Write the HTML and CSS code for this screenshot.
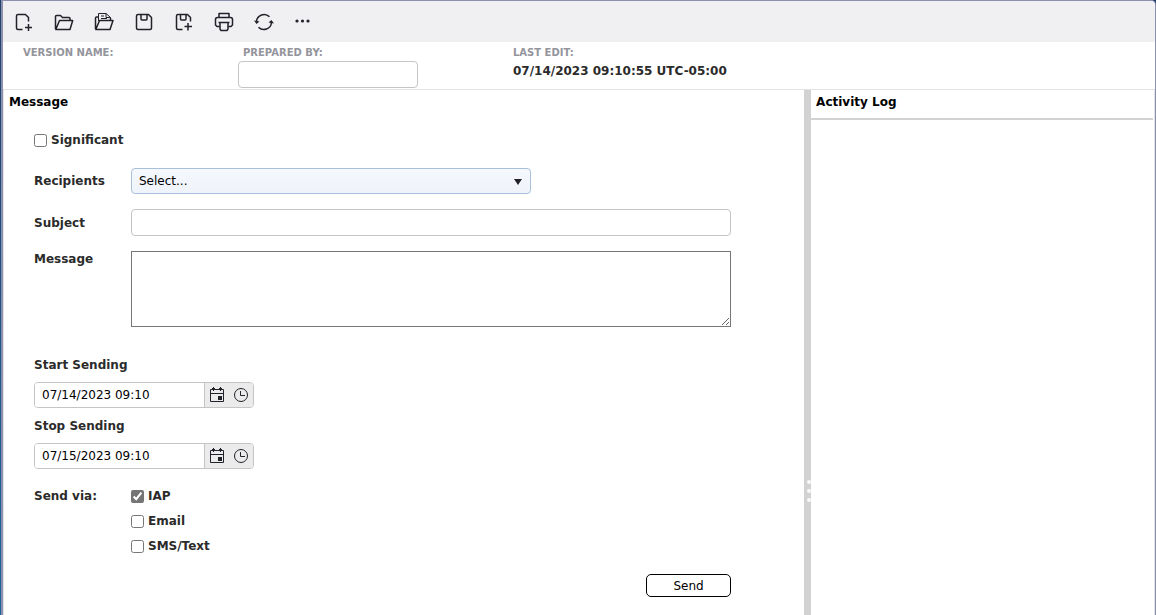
FILE: index.html
```html
<!DOCTYPE html>
<html lang="en">
<head>
    <meta charset="utf-8">
    <title>Message</title>
    <link rel="stylesheet" href="styles.css">
</head>
<body>
    <div class="window">
        <div class="toolbar">
            <button type="button" aria-label="New">
                <svg width="20" height="20" viewBox="0 0 20 20"><path d="M8.500 17.500H4Q2.500 17.500 2.500 16V4Q2.500 2.500 4 2.500H11.500L14.500 5.500V9.500M11 15.500H18M14.500 12V19"/></svg>
            </button>
            <button type="button" aria-label="Open">
                <svg width="20" height="20" viewBox="0 0 20 20"><path d="M1.500 17V4.500Q1.500 3.500 2.500 3.500H6.500L8.500 5.500H15Q16 5.500 16 6.500V8.500M1.800 17.500L5.500 8.500H18.700L16 17.500Z"/></svg>
            </button>
            <button type="button" aria-label="Open copy">
                <svg width="20" height="20" viewBox="0 0 20 20"><path d="M1.500 17V6Q1.500 5 2.500 5H4.500M16.500 6V8.500M1.800 17.500L5.500 8.500H19L16 17.500Z"/><path class="thin" d="M4.500 9V1.500H12L16.500 5.500V8M12 1.500V5.500H16.500M7 4H10M7 6.500H13"/></svg>
            </button>
            <button type="button" aria-label="Save">
                <svg width="20" height="20" viewBox="0 0 20 20"><path d="M4 2.500H14.500L17.500 5.500V16Q17.500 17.500 16 17.500H4Q2.500 17.500 2.500 16V4Q2.500 2.500 4 2.500ZM7 2.500V7Q7 8 8 8H12Q13 8 13 7V2.500"/></svg>
            </button>
            <button type="button" aria-label="Save as">
                <svg width="20" height="20" viewBox="0 0 20 20"><path d="M8.500 17.500H4Q2.500 17.500 2.500 16V4Q2.500 2.500 4 2.500H13.500L16.500 5.500V9.500M6.500 2.500V7Q6.500 8 7.500 8H11Q12 8 12 7V2.500M10.500 14.500H18M14 11V18.500"/></svg>
            </button>
            <button type="button" aria-label="Print">
                <svg width="20" height="20" viewBox="0 0 20 20"><path d="M5 5.500V1.500H15V5.500M5.500 14.500H3L1.500 13V7.500Q1.500 5.500 3.500 5.500H16.500Q18.500 5.500 18.500 7.500V13L17 14.500H14.500M4.500 10.500H15.500M6 10.500V17L7 18.500H13L14 17V10.500"/></svg>
            </button>
            <button type="button" aria-label="Refresh">
                <svg width="20" height="20" viewBox="0 0 20 20"><path d="M2.500 9.500A7.600 7.600 0 0 1 15.500 4.800M17.500 10.500A7.600 7.600 0 0 1 4.500 15.200"/><path class="solid" d="M0 8.500L5.500 9.500L2.500 12ZM14.500 10.500L17.500 8L20 11.500Z"/></svg>
            </button>
            <button type="button" aria-label="More">
                <svg width="20" height="20" viewBox="0 0 20 20"><g class="solid"><circle cx="3" cy="9" r="1.600"/><circle cx="8.500" cy="9" r="1.600"/><circle cx="14" cy="9" r="1.600"/></g></svg>
            </button>
        </div>

        <div class="info">
            <div class="info-item version">
                <span class="caption">VERSION NAME:</span>
            </div>
            <div class="info-item prepared">
                <label class="caption" for="prepared">PREPARED BY:</label>
                <input type="text" id="prepared" class="text-box">
            </div>
            <div class="info-item">
                <span class="caption">LAST EDIT:</span>
                <span class="last-edit">07/14/2023 09:10:55 UTC-05:00</span>
            </div>
        </div>

        <div class="panes">
            <div class="pane main-pane">
                <h1>Message</h1>
                <form class="message-form">
                    <label class="check"><input type="checkbox"> Significant</label>

                    <div class="fields">
                        <label for="recipients">Recipients</label>
                        <div class="picker">
                            <select id="recipients">
                                <option>Select...</option>
                            </select>
                            <svg class="arrow" width="8" height="6" viewBox="0 0 8 6"><path d="M0 0H8L4 6Z"/></svg>
                        </div>
                        <label for="subject">Subject</label>
                        <input type="text" id="subject" class="text-box">
                        <label for="message" class="top">Message</label>
                        <textarea id="message"></textarea>
                    </div>

                    <div class="dates">
                        <label for="start">Start Sending</label>
                        <div class="date-box">
                            <input type="text" id="start" value="07/14/2023 09:10">
                            <div class="date-buttons">
                                <button type="button" aria-label="Pick start date">
                                    <svg width="16" height="16" viewBox="0 0 16 16"><path d="M1.500 2.500H14.500V14.500H1.500ZM1.500 6.500H14.500M4.500 0V4M11.500 0V4M3 1.500H6M10 1.500H13"/><path class="solid" d="M9 9H13V13H9Z"/></svg>
                                </button>
                                <button type="button" aria-label="Pick start time">
                                    <svg width="16" height="16" viewBox="0 0 16 16"><circle cx="8" cy="8" r="6.500"/><path d="M7.500 4V8.500H12"/></svg>
                                </button>
                            </div>
                        </div>
                        <label for="stop">Stop Sending</label>
                        <div class="date-box">
                            <input type="text" id="stop" value="07/15/2023 09:10">
                            <div class="date-buttons">
                                <button type="button" aria-label="Pick stop date">
                                    <svg width="16" height="16" viewBox="0 0 16 16"><path d="M1.500 2.500H14.500V14.500H1.500ZM1.500 6.500H14.500M4.500 0V4M11.500 0V4M3 1.500H6M10 1.500H13"/><path class="solid" d="M9 9H13V13H9Z"/></svg>
                                </button>
                                <button type="button" aria-label="Pick stop time">
                                    <svg width="16" height="16" viewBox="0 0 16 16"><circle cx="8" cy="8" r="6.500"/><path d="M7.500 4V8.500H12"/></svg>
                                </button>
                            </div>
                        </div>
                    </div>

                    <div class="send-via">
                        <span>Send via:</span>
                        <div class="checks">
                            <label class="check"><input type="checkbox" checked> IAP</label>
                            <label class="check"><input type="checkbox"> Email</label>
                            <label class="check"><input type="checkbox"> SMS/Text</label>
                        </div>
                    </div>

                    <button type="button" class="send">Send</button>
                </form>
            </div>
            <div class="splitter"><i></i><i></i><i></i></div>
            <div class="pane log-pane">
                <h2>Activity Log</h2>
            </div>
        </div>
    </div>
</body>
</html>
```
FILE: styles.css
```css
* {
    box-sizing: border-box;
}
body {
    margin: 0;
    background: linear-gradient(#24406c, #1c659c);
    font-family: Verdana, "DejaVu Sans", sans-serif;
    font-size: 12px;
    line-height: 16px;
    color: #2b2b2b;
}
input, select, textarea, button {
    font: inherit;
    color: #000;
    margin: 0;
}
.window {
    display: flex;
    flex-direction: column;
    min-height: 100vh;
    margin-left: 1px;
    border: 1px solid #8b91ad;
    border-left-width: 2px;
    border-bottom: 0;
    border-top-right-radius: 5px;
    background: #fff;
    overflow: hidden;
}

/* toolbar */
.toolbar {
    display: flex;
    align-items: center;
    gap: 20px;
    height: 41px;
    padding: 0 11px;
    background: #f0eff2;
}
.toolbar button {
    width: 20px;
    height: 20px;
    padding: 0;
    border: 0;
    background: none;
}
svg {
    display: block;
    fill: none;
    stroke: #22222a;
}
.toolbar svg {
    stroke-width: 1.5;
    stroke-linejoin: round;
}
.toolbar .thin {
    stroke-width: 1;
}
svg .solid {
    fill: #22222a;
    stroke: none;
}

/* version info */
.info {
    display: flex;
    height: 48px;
    padding-left: 20px;
    border-bottom: 1px solid #e2e2e4;
}
.info-item {
    display: flex;
    flex-direction: column;
    padding-top: 3px;
}
.version {
    width: 215px;
}
.prepared {
    width: 275px;
}
.prepared .caption {
    padding-left: 5px;
}
.prepared .text-box {
    width: 180px;
}
.caption {
    font-size: 10px;
    font-weight: bold;
    color: #94949c;
}
.last-edit {
    padding-top: 2px;
    font-weight: bold;
}
.text-box {
    height: 27px;
    padding: 0 7px;
    border: 1px solid #c4c4c4;
    border-radius: 4px;
    background: #fff;
}

/* panes */
.panes {
    display: flex;
    flex: 1;
}
.pane {
    flex: 3;
    min-width: 0;
}
.main-pane {
    flex: 7;
    border-left: 1px solid #e6e4ea;
}
.log-pane {
    border-right: 1px solid #e2e2e4;
}
h1, h2 {
    margin: 0;
    padding: 4px 5px 0;
    font-size: 12px;
    line-height: 16px;
    color: #000;
}
h2 {
    height: 30px;
    margin-right: 1px;
    border-bottom: 2px solid #d2d2d2;
}
.splitter {
    display: flex;
    flex-direction: column;
    align-items: flex-end;
    gap: 5px;
    width: 7px;
    padding-top: 390px;
    background: #d2d2d2;
}
.splitter i {
    width: 4px;
    height: 4px;
    border-radius: 50%;
    background: #f8f8f8;
}

/* form */
.message-form {
    display: flex;
    flex-direction: column;
    max-width: 727px;
    padding: 22px 0 18px 30px;
    font-weight: bold;
}
.message-form input, select, textarea, .send {
    font-weight: normal;
}
.check {
    display: flex;
    align-items: center;
    gap: 4px;
}
.check input {
    width: 13px;
    height: 13px;
    accent-color: #757575;
}
.fields {
    display: grid;
    grid-template-columns: 97px 1fr;
    row-gap: 15px;
    align-items: center;
    margin-top: 20px;
}
.fields .top {
    align-self: start;
}
.picker {
    position: relative;
    max-width: 400px;
}
select {
    display: block;
    width: 100%;
    height: 26px;
    padding: 0 7px;
    appearance: none;
    border: 1px solid #a9c0da;
    border-radius: 4px;
    background: linear-gradient(#f5f8fd, #eff4fa);
}
.arrow {
    position: absolute;
    right: 9px;
    top: 11px;
    fill: #22222a;
    stroke: none;
    pointer-events: none;
}
textarea {
    display: block;
    width: 100%;
    height: 76px;
    border: 1px solid #767676;
    background: #fff;
}
.dates {
    display: flex;
    flex-direction: column;
    margin-top: 30px;
}
.date-box {
    display: flex;
    width: 220px;
    height: 26px;
    margin: 9px 0 10px;
    border: 1px solid #c4c4c4;
    border-radius: 4px;
    overflow: hidden;
}
.date-box input {
    flex: 1;
    min-width: 0;
    padding: 0 7px;
    border: 0;
}
.date-buttons {
    display: flex;
    gap: 8px;
    padding: 4px;
    border-left: 1px solid #c4c4c4;
    background: #ebebeb;
}
.date-buttons button {
    width: 16px;
    height: 16px;
    padding: 0;
    border: 0;
    background: none;
}
.send-via {
    display: grid;
    grid-template-columns: 97px 1fr;
    margin-top: 9px;
}
.checks {
    display: flex;
    flex-direction: column;
    gap: 9px;
}
.send {
    align-self: flex-end;
    width: 85px;
    height: 23px;
    margin-top: 20px;
    padding: 0;
    border: 1px solid #000;
    border-radius: 5px;
    background: #fff;
}
```
